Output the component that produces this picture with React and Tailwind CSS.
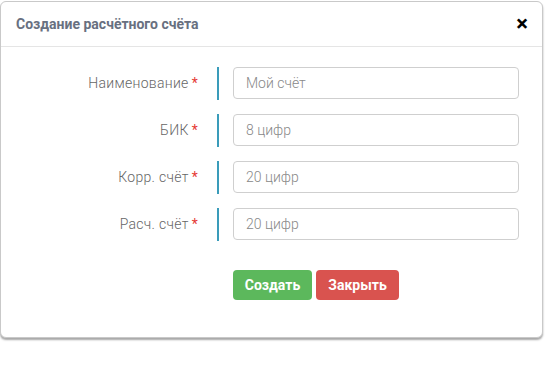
import React from 'react';

const fields = [
  { label: 'Наименование', placeholder: 'Мой счёт' },
  { label: 'БИК', placeholder: '8 цифр' },
  { label: 'Корр. счёт', placeholder: '20 цифр' },
  { label: 'Расч. счёт', placeholder: '20 цифр' },
];

const App = () => {
  return (
    <div className="w-[546px] h-[384px] bg-white overflow-hidden" style={{ fontFamily: 'Roboto, "Noto Sans", sans-serif' }}>
      <div className="w-[543px] h-[337px] mt-px bg-white rounded-md border border-[#c9c9c9] shadow-[0_2px_2px_rgba(0,0,0,0.35)] flex flex-col">
        {/* header */}
        <div className="h-[45px] flex items-center justify-between pl-[15px] pr-[14px] border-b border-[#e5e5e5]">
          <span className="text-[14px] font-bold text-[#687080]">Создание расчётного счёта</span>
          <span className="text-[22px] font-bold text-black leading-none">×</span>
        </div>

        {/* body */}
        <div className="flex flex-col gap-[15px] pt-[20px]">
          {fields.map((f) => (
            <div key={f.label} className="flex items-center h-[32px]">
              <div className="w-[197px] text-right text-[14px] font-light tracking-[0.3px] text-[#666]">
                {f.label}
                <span className="text-[#e53935] font-normal ml-[3px]">*</span>
              </div>
              <div className="w-[2px] h-[33px] bg-[#3a9cba] ml-[19px]" />
              <input
                placeholder={f.placeholder}
                className="ml-[14px] w-[286px] h-[32px] rounded border border-[#cfcfcf] px-3 text-[14px] font-light placeholder:text-[#888] outline-none"
              />
            </div>
          ))}
        </div>

        <div className="flex gap-1 pl-[232px] mt-[30px]">
          <button className="h-[30px] w-[79px] rounded bg-[#5cb85c] text-white text-[14px] font-bold">Создать</button>
          <button className="h-[30px] w-[83px] rounded bg-[#d9534f] text-white text-[14px] font-bold">Закрыть</button>
        </div>
      </div>
    </div>
  );
};

export default App;
